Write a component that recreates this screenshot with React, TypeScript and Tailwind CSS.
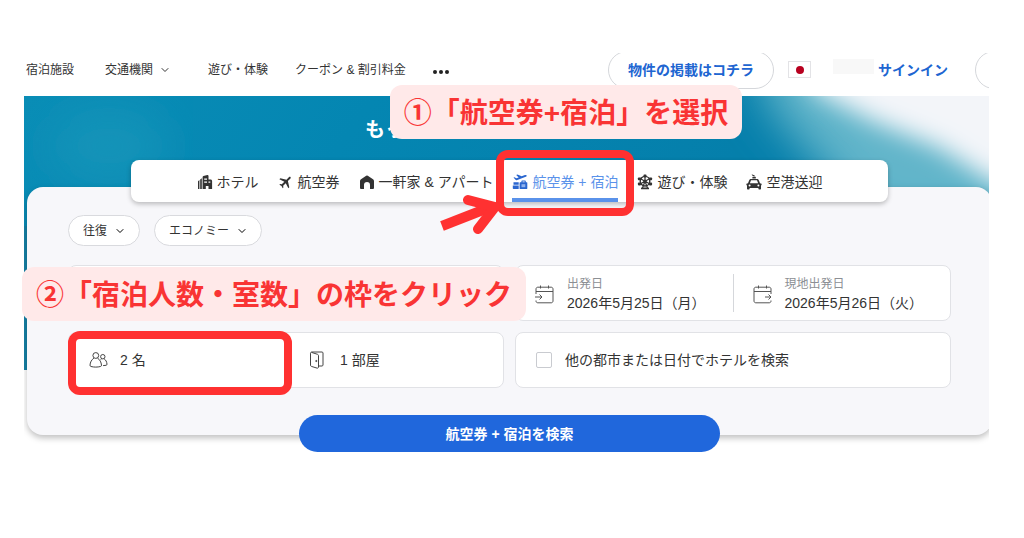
import { ReactNode, useState } from 'react';
import { ChevronDown } from 'lucide-react';
import { MdFlight } from 'react-icons/md';

interface IconProps {
  className?: string;
}

function HotelIcon({ className }: IconProps) {
  return (
    <svg className={className} viewBox="0 0 16 16" fill="currentColor" aria-hidden="true">
      <path d="M1 7.2 2.4 6v9H1zM3.2 5.4 4.8 4.2V15H3.2z" />
      <path
        fillRule="evenodd"
        d="M5.6 3.2c0-.5.3-.9.8-1.1l4-1c.6-.1 1.1.3 1.1.9v3.4h2c.9 0 1.6.7 1.6 1.6v8h-3.600v-3H8.800v3H5.600zM7.200 4.600v1.200h2.800V4.600zM7.200 7.600v1.200h2.800V7.600zM11.500 7.600v1.200h1.800V7.600z"
      />
    </svg>
  );
}

function HouseIcon({ className }: IconProps) {
  return (
    <svg className={className} viewBox="0 0 16 16" fill="currentColor" aria-hidden="true">
      <path d="M7.200 1.800a1.500 1.500 0 0 1 1.600 0l5.200 3.500c.7.500 1 1.100 1 1.900V14a1 1 0 0 1-1 1h-3v-4a3 3 0 0 0-6 0v4H2a1 1 0 0 1-1-1V7.200c0-.8.3-1.400 1-1.900z" />
    </svg>
  );
}

function PackageIcon({ className }: IconProps) {
  return (
    <svg className={className} viewBox="0 0 16 16" aria-hidden="true">
      <path
        fill="currentColor"
        d="M1.500 3.600 2.500 3.200 4.300 4.300 6.700 3.400 4.200.9 5.500.5 9.600 2.300 13 1c.8-.3 1.600 0 1.700.5.200.6-.2 1-.9 1.300L5.300 6c-.7.300-1.300.2-1.800-.3z"
      />
      <path fill="currentColor" d="M1.500 8.200h5.200v2.600H1.500zM.8 11.600h5.900V15H1.500a.7.700 0 0 1-.7-.7z" />
      <path
        fill="currentColor"
        fillRule="evenodd"
        d="M9.400 7.400c0-.6.4-1 1-1h2.400c.6 0 1 .4 1 1v.8h1c.3 0 .5.200.5.500v5.800c0 .3-.2.500-.5.500H8.100a.5.500 0 0 1-.5-.5V8.700c0-.3.200-.5.500-.5h1.300zm1.100 0v.8h2.200v-.8z"
      />
      <path fill="#8fb2ef" d="M9.500 10.200h3.800v3H9.500z" />
    </svg>
  );
}

function FerrisWheelIcon({ className }: IconProps) {
  return (
    <svg className={className} viewBox="0 0 16 16" fill="currentColor" aria-hidden="true">
      <circle cx="8" cy="7.200" r="4.800" fill="none" stroke="currentColor" strokeWidth="1.400" />
      <path
        d="M8 2v5.200M8 7.200 3.500 4.700M8 7.200l4.500-2.500M8 7.200 3.500 9.700M8 7.200l4.500 2.500M8 7.200 5.500 14M8 7.200 10.500 14"
        stroke="currentColor"
        strokeWidth="1.200"
      />
      <rect x="6.500" y=".6" width="3" height="2.800" rx=".8" />
      <rect x=".9" y="3.400" width="3.200" height="2.800" rx=".8" />
      <rect x="11.900" y="3.400" width="3.200" height="2.800" rx=".8" />
      <rect x=".9" y="8.600" width="3.200" height="2.800" rx=".8" />
      <rect x="11.900" y="8.600" width="3.200" height="2.800" rx=".8" />
      <rect x="4" y="13.600" width="8" height="1.600" rx=".5" />
      <circle cx="8" cy="7.200" r="1.600" />
    </svg>
  );
}

function TaxiIcon({ className }: IconProps) {
  return (
    <svg className={className} viewBox="0 0 16 16" fill="currentColor" aria-hidden="true">
      <path d="M5.600.3 8.200 1.200 9.600 2.600 6.800 2.200zM6.400 2.900h3.400v1.500H6.400z" />
      <path
        fillRule="evenodd"
        d="M5 5h6c.8 0 1.500.4 1.800 1.200L14 9.200l1.600.6v1.200l-.6.4v3.400c0 .4-.3.700-.7.700h-1.200a.7.700 0 0 1-.7-.7v-.9H3.600v.9c0 .4-.3.700-.7.700H1.700a.7.700 0 0 1-.7-.7v-3.400L.4 11V9.800L2 9.200l1.200-3C3.500 5.400 4.200 5 5 5zm0 1.300L3.900 9.200h8.200L11 6.300zM3.600 10.600a1 1 0 1 0 0 2 1 1 0 0 0 0-2zm8.800 0a1 1 0 1 0 0 2 1 1 0 0 0 0-2z"
      />
    </svg>
  );
}

function PeopleIcon({ className }: IconProps) {
  return (
    <svg className={className} viewBox="0 0 19 18" fill="none" stroke="currentColor" aria-hidden="true">
      <circle cx="6.800" cy="4.500" r="2.900" />
      <path d="M4.900 7.200C2.600 8.600 1.200 11.200 1 14.200c0 .7.300 1.100 1 1.300 3 .8 6.500.8 9.500 0 .7-.2 1-.6 1-1.300-.3-3-1.600-5.600-3.900-7" />
      <circle cx="13.800" cy="5.700" r="2.200" />
      <path d="M11.500 8.700c.3-.4.600-.6 1-.8M15.100 7.800c1.700 1.100 2.700 3 2.900 5.400 0 .6-.3 1-.9 1.100-1 .2-2 .3-3 .3" />
    </svg>
  );
}

function DoorIcon({ className }: IconProps) {
  return (
    <svg className={className} viewBox="0 0 19 18" fill="none" stroke="currentColor" aria-hidden="true">
      <path d="M10.500 15H14c.6 0 1-.4 1-1V2c0-.6-.4-1-1-1H4c-.8 0-1.500.5-1.500 1.200v12c0 .6.300 1 .9 1.200l5.600 1.700c.8.200 1.500-.2 1.500-1V4.700c0-.7-.4-1.200-1-1.400L3.500 1.400" />
      <circle cx="8.300" cy="10" r=".6" fill="currentColor" />
    </svg>
  );
}

function CalendarIcon({ className, leaving = false }: IconProps & { leaving?: boolean }) {
  return (
    <svg className={className} viewBox="0 0 19 19" fill="none" stroke="currentColor" aria-hidden="true">
      <path d="M5.500.5v3M13.500.5v3M1 6.500h17" />
      {leaving ? (
        <path d="M18 9V4c0-1-.7-1.800-1.800-1.800H2.800C1.700 2.200 1 3 1 4v12c0 1 .7 1.800 1.800 1.800h13.400c1.100 0 1.800-.8 1.800-1.800v-.5M12 12h6M15.500 9.500 18 12l-2.500 2.500" />
      ) : (
        <path d="M1 9V4c0-1 .7-1.800 1.800-1.800h13.400C17.300 2.200 18 3 18 4v12c0 1-.7 1.800-1.800 1.800H2.800C1.700 17.800 1 17 1 16v-.5M0 12h7M4.500 9.500 7 12l-2.500 2.500" />
      )}
    </svg>
  );
}

/** Sea and surf behind the search form. */
function HeroArtwork() {
  return (
    <svg
      className="col-start-1 row-start-1 h-[274px] w-full"
      viewBox="0 0 965 274"
      preserveAspectRatio="none"
      aria-hidden="true"
    >
      <defs>
        <linearGradient id="sea" x1="0" x2="1" y1="0" y2="0.2">
          <stop offset="0" stopColor="#0a8db6" />
          <stop offset="0.35" stopColor="#0486b2" />
          <stop offset="0.75" stopColor="#057fab" />
        </linearGradient>
        <filter id="soft" x="-20%" y="-40%" width="140%" height="180%">
          <feGaussianBlur stdDeviation="22" />
        </filter>
        <filter id="foam" x="-20%" y="-40%" width="140%" height="180%">
          <feGaussianBlur stdDeviation="12" />
        </filter>
      </defs>
      <rect width="965" height="274" fill="url(#sea)" />
      <ellipse cx="85" cy="50" rx="60" ry="40" fill="#1a9abb" opacity="0.6" filter="url(#soft)" />
      <rect y="130" width="20" height="144" fill="#1b7da0" opacity="0.7" />
      <path d="M725-60 745 10 780 50 850 130H1040V-60z" fill="#62b5ca" filter="url(#soft)" />
      <path d="M765-60 790-5 850 26 915 52 975 90H1020V-60z" fill="#f3f5f9" filter="url(#foam)" />
    </svg>
  );
}

interface Tab {
  label: string;
  icon: ReactNode;
}

const TABS: Tab[] = [
  { label: 'ホテル', icon: <HotelIcon className="size-4" /> },
  { label: '航空券', icon: <MdFlight className="size-4 rotate-45" /> },
  { label: '一軒家 & アパート', icon: <HouseIcon className="size-4" /> },
  { label: '航空券 + 宿泊', icon: <PackageIcon className="size-4 text-[#2a66cf]" /> },
  { label: '遊び・体験', icon: <FerrisWheelIcon className="size-4" /> },
  { label: '空港送迎', icon: <TaxiIcon className="size-4" /> },
];

const ACTIVE_TAB = '航空券 + 宿泊';

/** Red frame and arrow that point at the selected tab. */
function TabMarker() {
  return (
    <>
      <span className="pointer-events-none absolute -top-2.5 -right-4 -bottom-[18px] -left-4 rounded-xl border-8 border-[#ff3131]" />
      <svg
        className="pointer-events-none absolute top-[34px] -left-[74px] h-10 w-[62px]"
        viewBox="0 0 62 40"
        fill="none"
        stroke="#ff3131"
        strokeWidth="10"
        aria-hidden="true"
      >
        <path d="M4 32 50 14" />
        <path d="M30 6 57 13 40 35" strokeLinecap="round" strokeLinejoin="round" />
      </svg>
    </>
  );
}

function Header() {
  return (
    <header className="flex h-[43px] items-center overflow-hidden pb-2.5 pl-0.5 text-xs text-[#333]">
      <nav className="flex items-center gap-[31px] whitespace-nowrap">
        <a href="#stays">宿泊施設</a>
        <a href="#transport" className="flex items-center gap-1.5 pr-1.5">
          交通機関
          <ChevronDown className="size-3" />
        </a>
        <a href="#activities">遊び・体験</a>
        <a href="#coupons" className="-ml-1">クーポン & 割引料金</a>
        <button type="button" aria-label="その他" className="-ml-1 flex gap-0.5 pt-1">
          <span className="size-1 rounded-full bg-[#222]" />
          <span className="size-1 rounded-full bg-[#222]" />
          <span className="size-1 rounded-full bg-[#222]" />
        </button>
      </nav>
      <div className="ml-auto flex shrink-0 items-center text-sm font-bold whitespace-nowrap text-[#2065d1]">
        <a
          href="#list"
          className="flex h-[38px] items-center rounded-full border border-[#d5d7db] px-[19px]"
        >
          物件の掲載はコチラ
        </a>
        <button
          type="button"
          aria-label="日本語"
          className="ml-3.5 grid h-[17px] w-[23px] place-items-center border border-[#e3e3e6] bg-white"
        >
          <span className="size-2 rounded-full bg-[#b8001f]" />
        </button>
        <span className="mb-1.5 ml-[22px] h-[15px] w-[41px] bg-[#f8f8f8]" />
        <a href="#signin" className="ml-1">サインイン</a>
        <button
          type="button"
          aria-label="アカウント"
          className="-mr-[30px] ml-[27px] h-[38px] w-11 rounded-full border border-[#d5d7db]"
        />
      </div>
    </header>
  );
}

function SelectChip({ label, options, className }: { label: string; options: string[]; className: string }) {
  return (
    <div className={`grid items-center ${className}`}>
      <select
        aria-label={label}
        className="col-start-1 row-start-1 h-[31px] appearance-none rounded-full border border-[#d9dade] bg-white pl-3.5 text-xs text-[#333]"
      >
        {options.map((option) => (
          <option key={option}>{option}</option>
        ))}
      </select>
      <ChevronDown className="pointer-events-none col-start-1 row-start-1 mr-3.5 size-3 justify-self-end" />
    </div>
  );
}

function DateField({ label, value, leaving = false }: { label: string; value: string; leaving?: boolean }) {
  return (
    <button type="button" className="flex items-center gap-[13px] pt-0.5 pl-[19px] text-left whitespace-nowrap">
      <CalendarIcon className="size-[19px] text-[#555]" leaving={leaving} />
      <span className="flex flex-col">
        <span className="text-xs leading-[18px] text-[#8c8f94]">{label}</span>
        <span className="text-sm leading-5">{value}</span>
      </span>
    </button>
  );
}

const BOX = 'h-14 rounded-lg border border-[#e1e2e6] bg-white';

function SearchForm() {
  const [otherCity, setOtherCity] = useState(false);

  return (
    <form onSubmit={(e) => e.preventDefault()}>
      <div className="rounded-2xl bg-[#f7f7fa] px-[41px] pt-7 pb-[47px] shadow-[0_3px_6px_rgba(0,0,0,0.25)]">
        <div className="flex gap-3.5">
          <SelectChip label="旅程" options={['往復', '片道']} className="w-[72px]" />
          <SelectChip label="座席クラス" options={['エコノミー', 'ビジネス']} className="w-[108px]" />
        </div>
        <div className="mt-[19px] grid grid-cols-2 gap-[11px] text-sm text-[#333]">
          <div className={`grid grid-cols-2 ${BOX}`}>
            <input aria-label="出発地" className="min-w-0 px-4" />
            <input aria-label="目的地" className="min-w-0 px-4" />
          </div>
          <div className={`grid grid-cols-[1fr_1px_1fr] ${BOX}`}>
            <DateField label="出発日" value="2026年5月25日（月）" />
            <span className="my-2 bg-[#d5d7db]" />
            <DateField label="現地出発日" value="2026年5月26日（火）" leaving />
          </div>
          <div className={`grid grid-cols-2 ${BOX}`}>
            <button type="button" className="relative flex items-center gap-3 pl-5">
              <PeopleIcon className="h-[18px] w-[19px] text-[#444]" />
              2 名
              <span className="pointer-events-none absolute -top-0.5 -right-1.5 -bottom-2 -left-px rounded-xl border-8 border-[#ff3131]" />
            </button>
            <button type="button" className="flex items-center gap-[13px] pl-[22px]">
              <DoorIcon className="h-[18px] w-[19px] text-[#444]" />
              1 部屋
            </button>
          </div>
          <label className={`flex items-center gap-[13px] pl-5 ${BOX}`}>
            <input
              type="checkbox"
              checked={otherCity}
              onChange={(e) => setOtherCity(e.target.checked)}
              className="size-4 appearance-none rounded-xs border border-[#c9cbd0] bg-white checked:bg-[#2067dc]"
            />
            他の都市または日付でホテルを検索
          </label>
        </div>
      </div>
      <button
        type="submit"
        className="relative mx-auto -mt-5 block h-[37px] w-[421px] rounded-full bg-[#2067dc] text-sm font-bold text-white"
      >
        航空券 + 宿泊を検索
      </button>
    </form>
  );
}

function Callout({ children, className }: { children: ReactNode; className: string }) {
  return (
    <p
      className={`absolute z-20 flex h-[54px] items-center justify-center rounded-xl bg-[#ffe9e9] pt-1 text-[28px] font-bold whitespace-nowrap text-[#f93434] ${className}`}
    >
      {children}
    </p>
  );
}

export default function App() {
  return (
    <main
      lang="ja"
      className="relative bg-white pt-[53px] pr-[35px] pb-20 pl-6 font-['Liberation_Sans','Noto_Sans_CJK_JP',sans-serif]"
    >
      <div className="overflow-x-clip">
        <Header />
        <section className="grid">
          <HeroArtwork />
          <div className="col-start-1 row-start-1 -mr-[3px] ml-[3px]">
            <h1 className="flex h-16 items-center pt-1 pl-[338px] text-xl font-bold text-white">もっ</h1>
            <nav className="relative z-10 mx-[104px] flex h-[42px] justify-center gap-[19px] rounded-lg bg-white text-sm whitespace-nowrap text-[#333] shadow-[0_2px_5px_rgba(0,0,0,0.25)]">
              {TABS.map(({ label, icon }) => (
                <a
                  key={label}
                  href="#search"
                  aria-current={label === ACTIVE_TAB ? 'page' : undefined}
                  className={`relative flex items-center gap-1 border-b-4 pt-1.5 ${
                    label === ACTIVE_TAB ? 'border-[#5a92ea] text-[#5a92ea]' : 'border-transparent'
                  }`}
                >
                  {icon}
                  {label}
                  {label === ACTIVE_TAB && <TabMarker />}
                </a>
              ))}
            </nav>
            <div className="-mt-[15px]">
              <SearchForm />
            </div>
          </div>
        </section>
      </div>
      <Callout className="top-[85px] left-[390px] w-[352px]">①「航空券+宿泊」を選択</Callout>
      <Callout className="top-[267px] left-[22px] w-[504px]">②「宿泊人数・室数」の枠をクリック</Callout>
    </main>
  );
}
